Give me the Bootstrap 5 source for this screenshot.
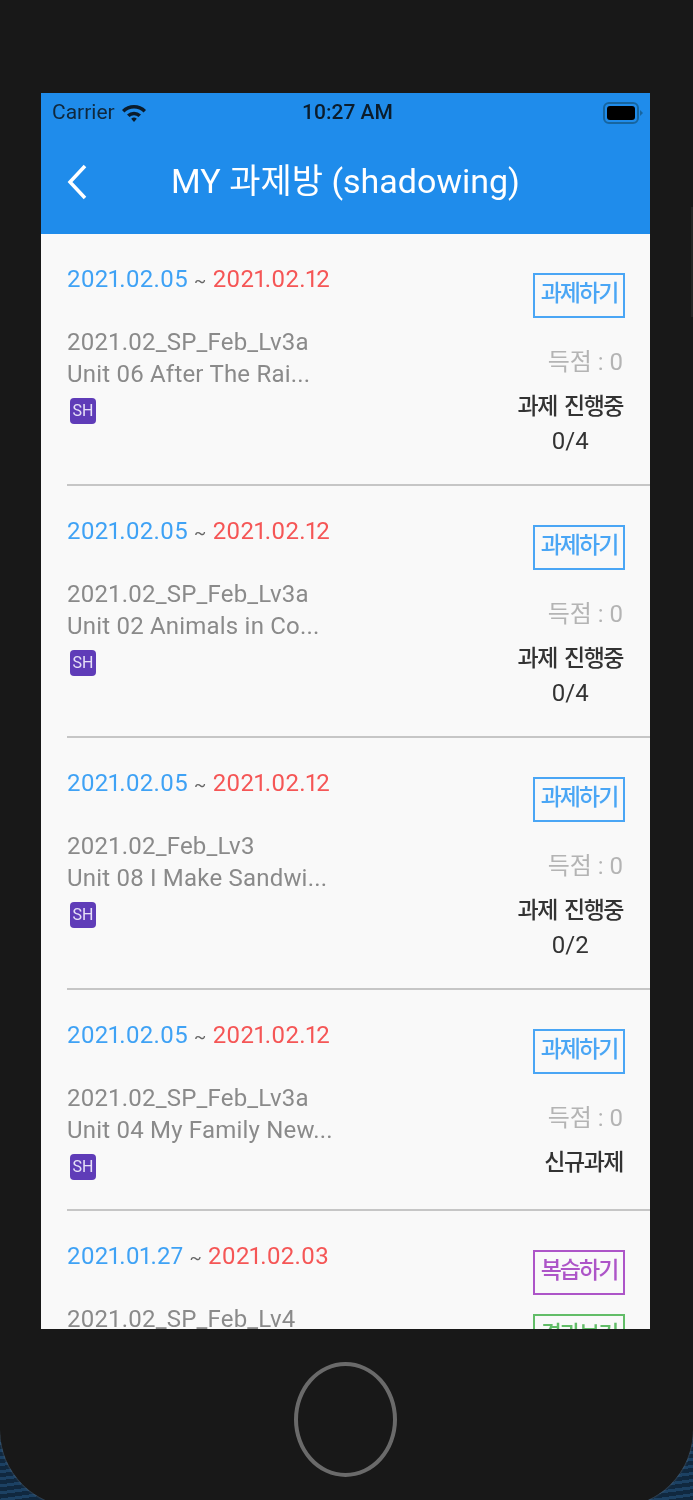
<!DOCTYPE html>
<html lang="ko">
<head>
  <meta charset="UTF-8" />
  <meta name="viewport" content="width=device-width, initial-scale=1.0" />
  <title>MY 과제방 (shadowing)</title>
  <link href="https://cdn.jsdelivr.net/npm/bootstrap@5.3.0/dist/css/bootstrap.min.css" rel="stylesheet">
  <style>
    html, body {
      height: 1500px;
      overflow: hidden;
    }
    body {
      background-color: #163450;
      background-image: repeating-linear-gradient(172deg, #1c4163 0 3px, #10283f 3px 7px);
      font-family: Roboto, "Noto Sans CJK KR", sans-serif;
    }
    .device {
      position: relative;
      height: 1507px;
      padding: 93px 43px 0 41px;
      background-color: #181818;
      border-radius: 0 0 77px 77px;
      box-shadow: 0 0 2px rgba(130, 140, 150, .7);
    }
    .device::after {
      content: "";
      position: absolute;
      top: 207px;
      right: 0;
      width: 2px;
      height: 110px;
      background-color: #262626;
    }
    .screen {
      height: 1236px;
      overflow: hidden;
      background-color: #f9f9f9;
      filter: blur(.5px);
    }
    .app-head {
      height: 141px;
      background-color: #1f8ceb;
    }
    .status-row {
      height: 40px;
      padding: 0 7px 0 11px;
      font-size: 21px;
      color: #10283c;
    }
    .status-side {
      width: 150px;
      gap: 6px;
    }
    .status-time {
      font-weight: 500;
      color: #0b1c2b;
    }
    .title-row {
      height: 101px;
      padding: 0 26px 4px 26px;
      color: #fff;
    }
    .back-wrap {
      width: 0;
    }
    .app-title {
      font-size: 34px;
    }
    .task-item {
      margin-left: 26px;
      padding: 27px 25px 25px 0;
      border-bottom: 2px solid #c6c6c6;
    }
    .date-line {
      font-size: 24px;
      line-height: 36px;
      color: #666;
      font-variant-numeric: proportional-nums;
      letter-spacing: .2px;
    }
    .date-start { color: #3fa2f5; }
    .date-end { color: #f55656; }
    .date-sep { font-size: 18px; }
    .task-name {
      margin-top: 27px;
      font-size: 24px;
      line-height: 32px;
      color: #8a8a8a;
      letter-spacing: .2px;
    }
    .tag-sh {
      width: 26px;
      height: 26px;
      margin: 8px 0 4px 3px;
      border-radius: 4px;
      background-color: #5f3cb8;
      color: #e6e0f7;
      font-size: 16px;
    }
    .action-box {
      width: 92px;
      height: 45px;
      margin-top: 12px;
      padding-bottom: 2px;
      border: 2px solid #4aa6f5;
      color: #4aa6f5;
      font-size: 23px;
      font-weight: 500;
      letter-spacing: -2px;
    }
    .action-review {
      border-color: #ad55c8;
      color: #ad55c8;
    }
    .action-result {
      margin-top: 19px;
      border-color: #62bd68;
      color: #62bd68;
    }
    .score-line {
      margin: 26px 2px 0 0;
      font-size: 24px;
      line-height: 36px;
      color: #b4b4b4;
    }
    .state-line {
      margin: 9px 2px 0 0;
      font-size: 24px;
      line-height: 35px;
      color: #333;
    }
    .state-text {
      font-size: 23px;
      font-weight: 500;
      letter-spacing: -1.5px;
      word-spacing: 3px;
    }
    .home-btn {
      width: 103px;
      height: 115px;
      margin-top: 33px;
      border: 4px solid #6a6a6a;
      border-radius: 50%;
    }
  </style>
</head>
<body>
  <div class="device">
    <div class="screen">
      <div class="app-head">
        <div class="status-row d-flex align-items-center justify-content-between">
          <div class="status-side d-flex align-items-center">
            <span>Carrier</span>
            <svg width="26" height="20" viewBox="0 0 26 20"><path d="M1 7a17 17 0 0 1 24 0l-2.400 2.500a13.600 13.600 0 0 0-19.200 0zM6 11.500a10 10 0 0 1 14 0l-2.500 2.500a6.400 6.400 0 0 0-9 0zM10.200 15.800a4 4 0 0 1 5.600 0L13 19z" fill="#0b1c2b"/></svg>
          </div>
          <span class="status-time">10:27 AM</span>
          <div class="status-side d-flex justify-content-end">
            <svg width="40" height="22" viewBox="0 0 40 22"><rect x="1" y="1" width="34" height="20" rx="5" fill="none" stroke="#17659f" stroke-width="2"/><rect x="4" y="4" width="28" height="14" rx="3" fill="#000"/><path d="M37 8l3 3-3 3z" fill="#17659f"/></svg>
          </div>
        </div>
        <div class="title-row d-flex align-items-center">
          <div class="back-wrap">
            <svg width="22" height="36" viewBox="0 0 22 36"><path d="M18 2 3 18l15 16" fill="none" stroke="#fff" stroke-width="3.500"/></svg>
          </div>
          <div class="app-title flex-grow-1 text-center">MY 과제방 (shadowing)</div>
        </div>
      </div>

      <div id="task-list"></div>
    </div>
    <div class="home-btn mx-auto"></div>
  </div>

  <script>
    const tasks = [
      { start: "2021.02.05", end: "2021.02.12", course: "2021.02_SP_Feb_Lv3a", unit: "Unit 06 After The Rai...", state: "과제 진행중", count: "0/4" },
      { start: "2021.02.05", end: "2021.02.12", course: "2021.02_SP_Feb_Lv3a", unit: "Unit 02 Animals in Co...", state: "과제 진행중", count: "0/4" },
      { start: "2021.02.05", end: "2021.02.12", course: "2021.02_Feb_Lv3", unit: "Unit 08 I Make Sandwi...", state: "과제 진행중", count: "0/2" },
      { start: "2021.02.05", end: "2021.02.12", course: "2021.02_SP_Feb_Lv3a", unit: "Unit 04 My Family New...", state: "신규과제", count: "" },
      { start: "2021.01.27", end: "2021.02.03", course: "2021.02_SP_Feb_Lv4", unit: "", state: "", count: "", review: true }
    ];

    document.getElementById('task-list').innerHTML = tasks.map(t => `
      <div class="task-item d-flex justify-content-between">
        <div>
          <div class="date-line"><span class="date-start">${t.start}</span> <span class="date-sep">~</span> <span class="date-end">${t.end}</span></div>
          <div class="task-name">${t.course}<br>${t.unit}</div>
          ${t.review ? '' : '<div class="tag-sh d-flex align-items-center justify-content-center">SH</div>'}
        </div>
        <div class="d-flex flex-column align-items-end">
          ${t.review
            ? `<div class="action-box action-review d-flex align-items-center justify-content-center">복습하기</div>
               <div class="action-box action-result d-flex align-items-center justify-content-center">결과보기</div>`
            : `<div class="action-box d-flex align-items-center justify-content-center">과제하기</div>
               <div class="score-line">득점 : 0</div>
               <div class="state-line text-center"><span class="state-text">${t.state}</span>${t.count ? '<br>' + t.count : ''}</div>`}
        </div>
      </div>`).join('');
  </script>
  <script src="https://cdn.jsdelivr.net/npm/bootstrap@5.3.0/dist/js/bootstrap.bundle.min.js"></script>
</body>
</html>
